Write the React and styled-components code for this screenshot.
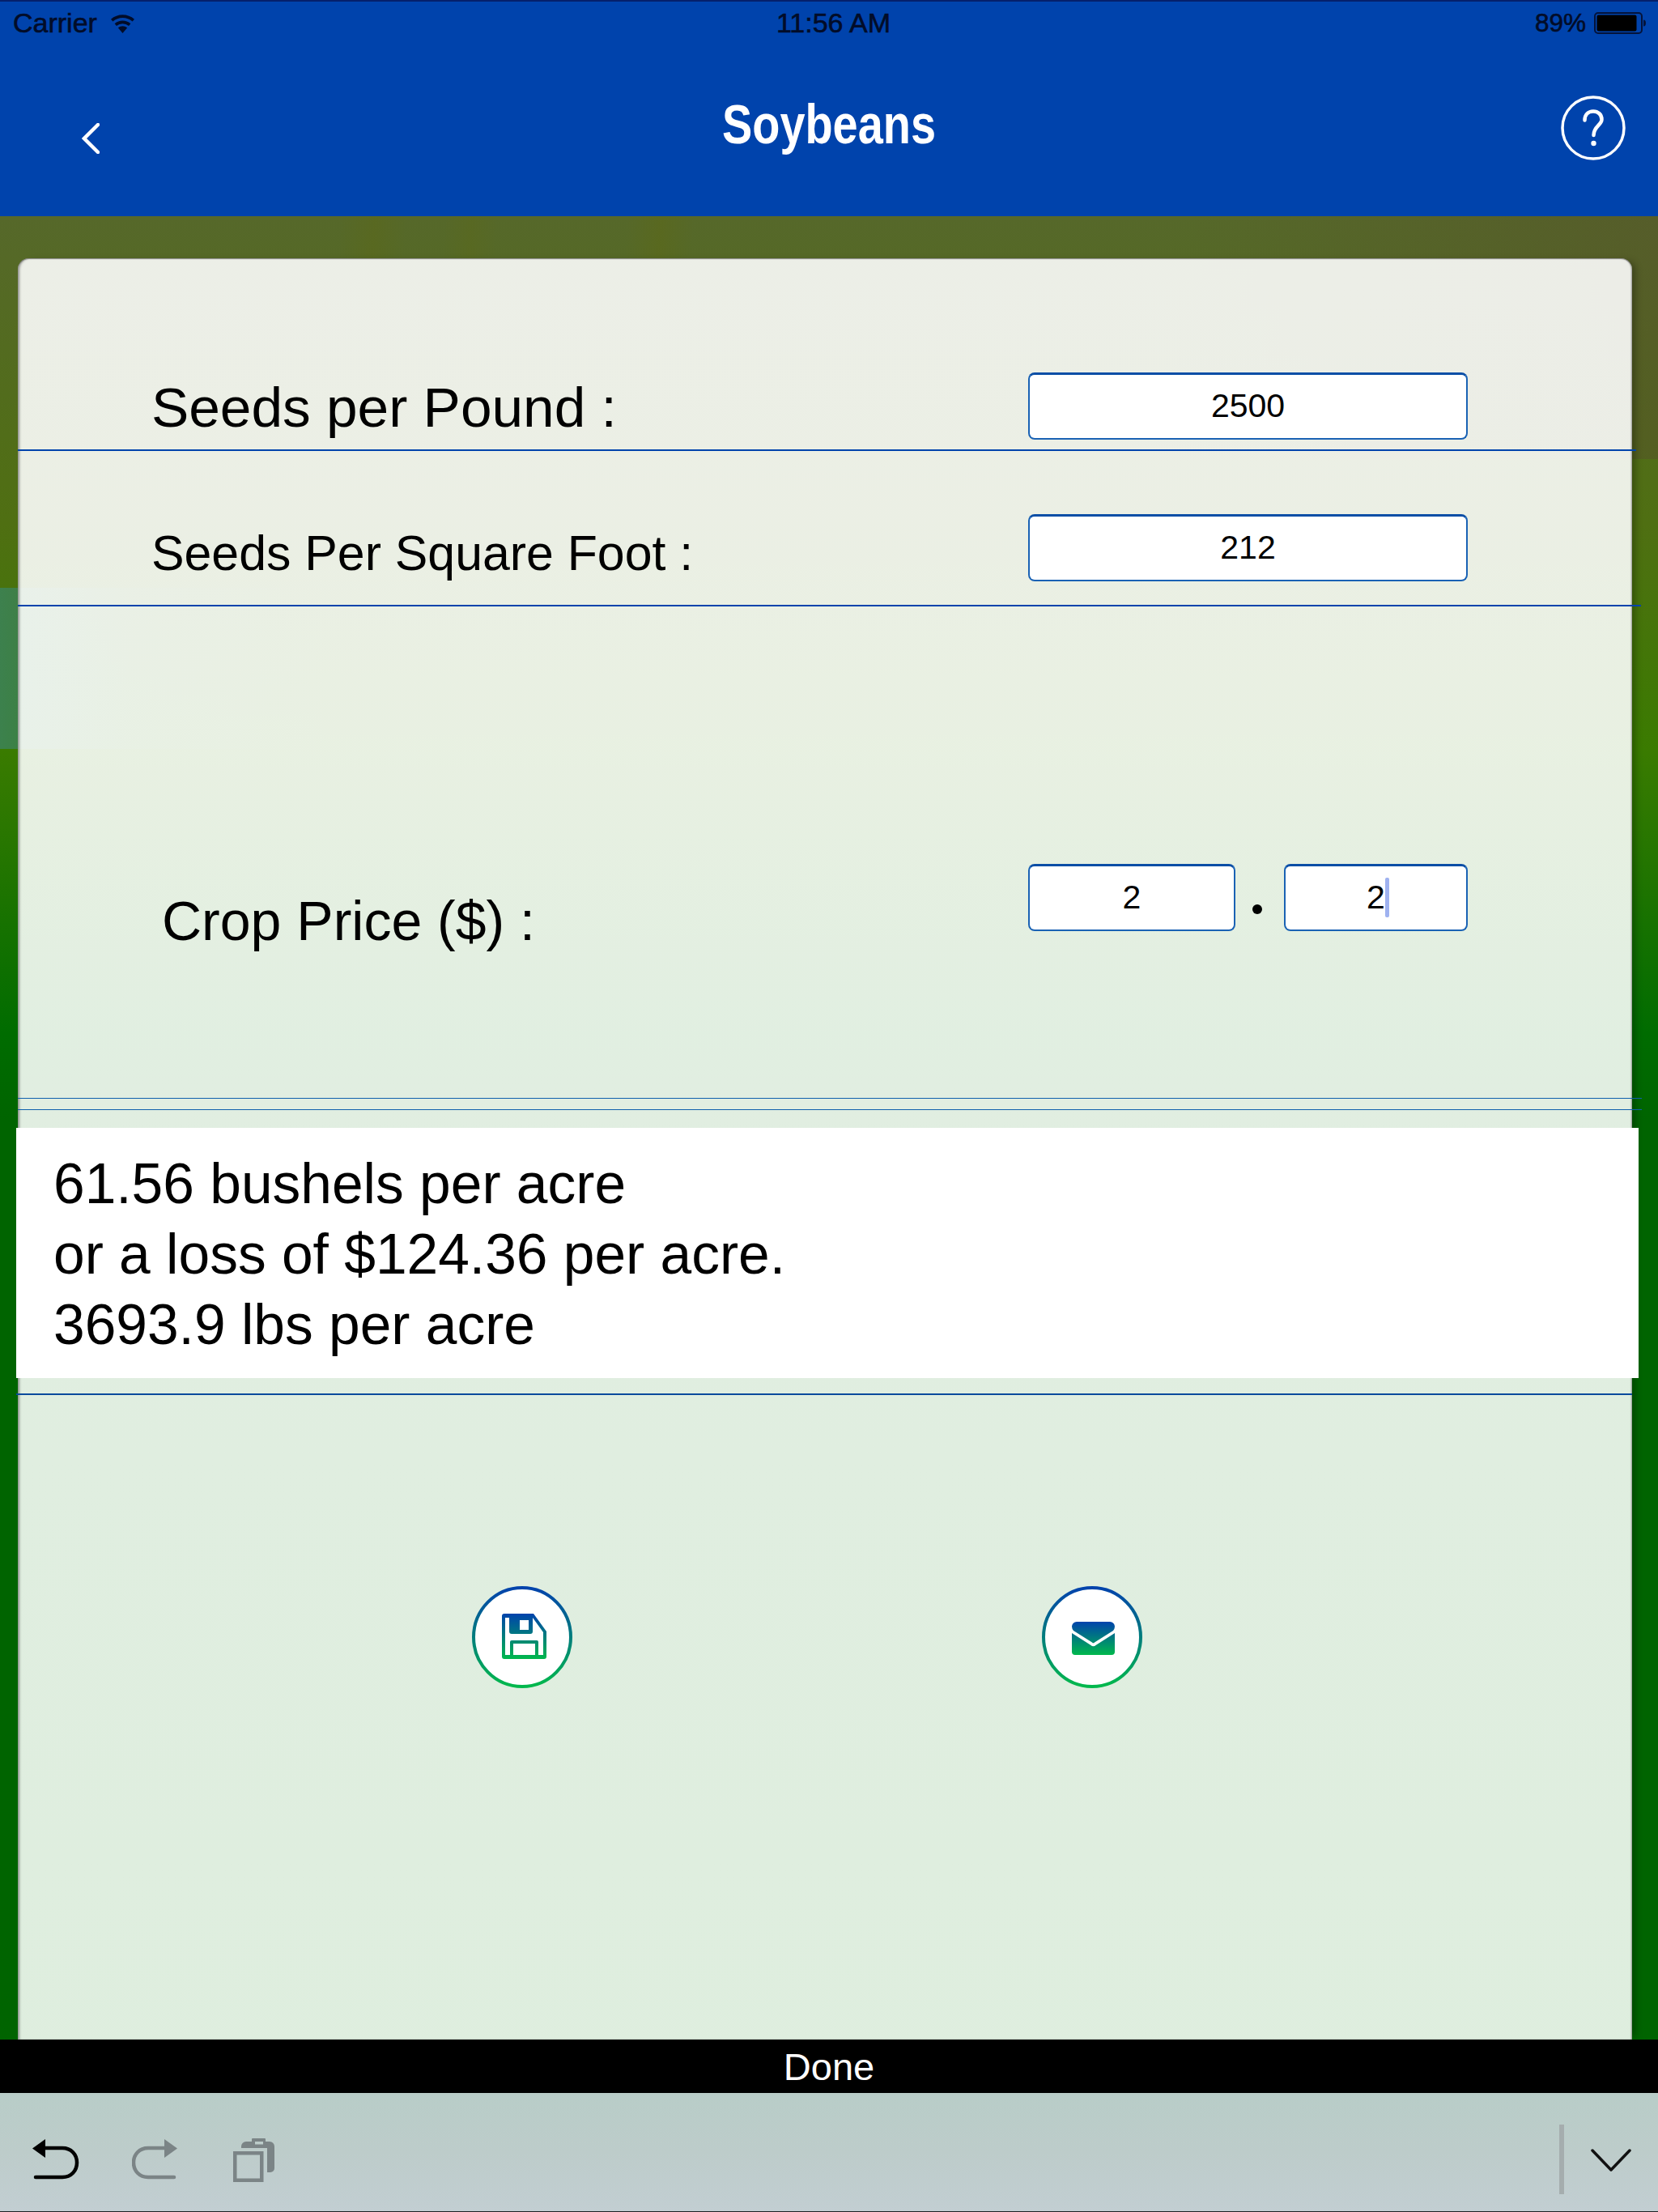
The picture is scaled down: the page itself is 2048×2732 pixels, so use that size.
import React from "react";
import styled, { createGlobalStyle } from "styled-components";

const Global = createGlobalStyle`
  html, body { margin: 0; padding: 0; background: #000; }
  body { font-family: "Liberation Sans", Arial, sans-serif; color: #000; }
`;

const Screen = styled.div`
  width: 2048px;
  height: 2732px;
  display: flex;
  flex-direction: column;
  overflow: hidden;
`;

const TopBar = styled.header`
  height: 267px;
  flex: none;
  box-sizing: border-box;
  background: #0043ac;
  border-top: 2px solid #05206b;
  display: flex;
  flex-direction: column;
`;

const StatusBar = styled.div`
  height: 52px;
  padding: 0 15px 0 16px;
  display: grid;
  grid-template-columns: 1fr auto 1fr;
  align-items: center;
  font-size: 34px;
  color: #020c28;
  -webkit-text-stroke: 0.6px #020c28;
`;

const StatusLeft = styled.div`
  display: flex;
  align-items: center;
  gap: 15px;
`;

const StatusClock = styled.span`
  margin-left: 10px;
`;

const StatusRight = styled.div`
  display: flex;
  align-items: center;
  justify-content: flex-end;
  gap: 10px;
  font-size: 31.5px;
`;

const NavBar = styled.div`
  flex: 1;
  display: grid;
  grid-template-columns: 1fr auto 1fr;
  align-items: start;
  padding: 0 40px;
`;

const NavBack = styled.div`
  margin: 98px 0 0 61px;
  line-height: 0;
`;

const NavTitle = styled.h1`
  margin: 60px 0 0;
  font-size: 69px;
  line-height: 80px;
  font-weight: 700;
  color: #fff;
  text-align: center;
  transform: scaleX(0.81);
`;

const NavHelp = styled.div`
  margin-top: 64px;
  display: flex;
  justify-content: flex-end;
  line-height: 0;
`;

const Backdrop = styled.main`
  flex: 1;
  min-height: 0;
  display: flex;
  padding: 52px 32px 0 22px;
  background:
    linear-gradient(90deg, rgba(60, 130, 85, 0.9) 0, rgba(60, 130, 85, 0.25) 160px, rgba(60, 130, 85, 0) 400px)
      0 459px / 100% 199px no-repeat,
    linear-gradient(
        94deg,
        transparent 20.5%,
        rgba(95, 105, 15, 0.3) 22.6%,
        transparent 24.5%,
        transparent 26.8%,
        rgba(95, 105, 15, 0.25) 28.4%,
        transparent 30%,
        transparent 37.8%,
        rgba(95, 105, 15, 0.35) 39.8%,
        transparent 41.8%
      )
      0 0 / 100% 52px no-repeat,
    linear-gradient(100deg, rgba(85, 85, 42, 0) 70%, rgba(85, 80, 42, 0.5) 100%) 0 0 / 100% 300px no-repeat,
    linear-gradient(180deg, #56682a 0, #4f6f12 380px, #3a7b00 660px, #006c00 1010px, #006400 1120px);
`;

const Card = styled.section`
  flex: 1;
  display: flex;
  flex-direction: column;
  background: linear-gradient(180deg, rgba(255, 255, 255, 0.89) 0, rgba(250, 255, 250, 0.89) 100%);
  border-radius: 14px 14px 0 0;
  box-shadow:
    inset 3px 0 3px -1px rgba(70, 70, 70, 0.55),
    inset -2px 0 2px -1px rgba(70, 70, 70, 0.55),
    inset 0 2px 1px -1px rgba(70, 70, 70, 0.55),
    8px 0 10px -4px rgba(0, 0, 0, 0.3);
`;

const FieldRow = styled.div`
  height: ${(p) => p.$height}px;
  box-sizing: border-box;
  flex: none;
  display: grid;
  grid-template-columns: 1248px 543px;
  border-bottom: ${(p) => (p.$thin ? "1.5px solid #0f60ac" : "2px solid #0043ac")};
  margin-right: ${(p) => p.$overhang}px;
`;

const FieldLabel = styled.label`
  padding-left: ${(p) => p.$indent}px;
  padding-top: ${(p) => p.$top}px;
  font-size: ${(p) => p.$size}px;
  line-height: 80px;
  white-space: nowrap;
`;

const Inputs = styled.div`
  padding-top: ${(p) => p.$top}px;
  display: flex;
  align-items: flex-start;
`;

const Input = styled.div`
  box-sizing: border-box;
  height: 83px;
  width: ${(p) => p.$width}px;
  flex: none;
  background: #fff;
  border: 2px solid #1a62b4;
  border-top: 3px solid #0a4ea6;
  border-radius: 8px;
  display: flex;
  align-items: center;
  justify-content: center;
  font-size: 41px;
  line-height: 1;
  padding-bottom: 2px;
`;

const Dot = styled.div`
  flex: 1;
  height: 83px;
  box-sizing: border-box;
  display: flex;
  align-items: flex-end;
  justify-content: center;
  padding: 0 6px 21px 0;

  &::before {
    content: "";
    width: 12px;
    height: 12px;
    border-radius: 50%;
    background: #000;
  }
`;

const Caret = styled.span`
  display: inline-block;
  width: 5px;
  height: 49px;
  margin-right: -5px;
  border-radius: 2px;
  background: #9fb2f0;
  vertical-align: middle;
`;

const Rule = styled.div`
  height: 1.5px;
  flex: none;
  background: #0f60ac;
  margin: 12.5px -12px 0 0;
`;

const Result = styled.output`
  display: block;
  margin: 22px -8px 0 -2px;
  height: 309px;
  box-sizing: border-box;
  flex: none;
  padding: 26px 46px 0;
  background: #fff;
  font-size: 69.5px;
  line-height: 87px;
`;

const ResultRule = styled.div`
  height: 2px;
  flex: none;
  margin: 19px 0 0 -2px;
  background: #0a4a9c;
`;

const ActionRow = styled.div`
  flex: 1;
  display: grid;
  grid-template-columns: 124px 124px;
  column-gap: 580px;
  padding: 236px 0 0 561px;
`;

const ActionButton = styled.button`
  width: 124px;
  height: 126px;
  padding: 0;
  border: 0;
  background: none;
  display: block;
`;

const DoneBar = styled.div`
  height: 66px;
  flex: none;
  background: #000;
  color: #fff;
  font-size: 47px;
  line-height: 68px;
  text-align: center;
`;

const KeyTools = styled.footer`
  height: 147px;
  flex: none;
  box-sizing: border-box;
  border-bottom: 1px solid #1c2224;
  background: linear-gradient(180deg, #b8cdc8 0, #bdccca 50%, #c2ced2 100%);
  display: flex;
  align-items: flex-start;
  padding: 53px 0 0 40px;
`;

const ToolIcon = styled.svg`
  flex: none;
  display: block;
  margin-top: ${(p) => p.$top}px;
  margin-left: ${(p) => p.$gap || 0}px;
`;

const ToolDivider = styled.div`
  width: 6px;
  height: 86px;
  margin: -14px 0 0 auto;
  background: #a5adae;
`;

const HideKeys = styled(ToolIcon)`
  margin-right: 33px;
`;

function Wifi() {
  return (
    <svg width="33" height="25" viewBox="0 0 33 25" aria-hidden="true">
      <path d="M16.5 25 L10.8 18.2 A9 9 0 0 1 22.2 18.2 Z" fill="#020c28" />
      <path d="M7.8 14.6 A13.5 13.5 0 0 1 25.2 14.6" fill="none" stroke="#020c28" strokeWidth="3.6" />
      <path d="M3.2 9.2 A20 20 0 0 1 29.8 9.2" fill="none" stroke="#020c28" strokeWidth="3.6" />
    </svg>
  );
}

function Battery() {
  return (
    <svg width="64" height="27" viewBox="0 0 64 27" aria-hidden="true">
      <rect x="1" y="1" width="58" height="25" rx="4" fill="none" stroke="#04133a" strokeWidth="2" />
      <rect x="3.5" y="3.5" width="49" height="20" rx="2" fill="#000" />
      <path d="M61 9.5 a3 4 0 0 1 3 4 a3 4 0 0 1 -3 4 Z" fill="#04133a" />
    </svg>
  );
}

function BackChevron() {
  return (
    <svg width="22" height="38" viewBox="0 0 22 38" aria-hidden="true">
      <path d="M20 2 L3 19 L20 36" fill="none" stroke="#fff" strokeWidth="4.5" strokeLinecap="round" />
    </svg>
  );
}

function HelpCircle() {
  return (
    <svg width="80" height="80" viewBox="0 0 80 80" aria-hidden="true">
      <circle cx="40" cy="40" r="38" fill="none" stroke="#fff" strokeWidth="3.5" />
      <path d="M29.5 30.5 C29.5 23.5 34 19.5 40 19.5 C46 19.5 50.5 23.5 50.5 29.5 C50.5 36.5 40.5 38 40.5 49" fill="none" stroke="#fff" strokeWidth="4.5" strokeLinecap="round" />
      <circle cx="40.5" cy="59" r="3.2" fill="#fff" />
    </svg>
  );
}

function RingIcon({ id, children }) {
  return (
    <svg width="124" height="126" viewBox="0 0 124 126" aria-hidden="true">
      <defs>
        <linearGradient id={id} x1="0" y1="0" x2="0" y2="1">
          <stop offset="0" stopColor="#0043ac" />
          <stop offset="1" stopColor="#00b84c" />
        </linearGradient>
      </defs>
      <ellipse cx="62" cy="63" rx="60" ry="61" fill="#fff" stroke={`url(#${id})`} strokeWidth="4" />
      {children}
    </svg>
  );
}

function SaveIcon() {
  return (
    <RingIcon id="saveRing">
      <defs>
        <linearGradient id="saveGrad" gradientUnits="userSpaceOnUse" x1="0" y1="34" x2="0" y2="90">
          <stop offset="0" stopColor="#0043ac" />
          <stop offset="1" stopColor="#00b84c" />
        </linearGradient>
      </defs>
      <path
        fillRule="evenodd"
        fill="url(#saveGrad)"
        d="M37 37 a3 3 0 0 1 3 -3 H76 L92 56 V87 a3 3 0 0 1 -3 3 H40 a3 3 0 0 1 -3 -3 Z
           M41 39 V85 H47 V69 a2 2 0 0 1 2 -2 H80 a2 2 0 0 1 2 2 V85 H88 V57 L75 39 V56 a3 3 0 0 1 -3 3 H49 a3 3 0 0 1 -3 -3 V39 Z
           M51 71 V85 H78 V71 Z
           M59 42 V54 H70 V42 Z"
      />
    </RingIcon>
  );
}

function MailIcon() {
  return (
    <RingIcon id="mailRing">
      <defs>
        <linearGradient id="mailGrad" gradientUnits="userSpaceOnUse" x1="0" y1="44" x2="0" y2="85">
          <stop offset="0" stopColor="#0043ac" />
          <stop offset="1" stopColor="#00b84c" />
        </linearGradient>
      </defs>
      <path fill="url(#mailGrad)" d="M43 44 H84 a6 6 0 0 1 6 6 a8 8 0 0 1 -2 5 L65 69.5 a2 2 0 0 1 -3 0 L39 55 a8 8 0 0 1 -2 -5 a6 6 0 0 1 6 -6 Z" />
      <path fill="url(#mailGrad)" d="M37 58 L60.5 73 a4 4 0 0 0 6 0 L90 58 V81 a4 4 0 0 1 -4 4 H41 a4 4 0 0 1 -4 -4 Z" />
    </RingIcon>
  );
}

export default function App() {
  return (
    <Screen>
      <Global />
      <TopBar>
        <StatusBar>
          <StatusLeft>
            <span>Carrier</span>
            <Wifi />
          </StatusLeft>
          <StatusClock>11:56 AM</StatusClock>
          <StatusRight>
            <span>89%</span>
            <Battery />
          </StatusRight>
        </StatusBar>
        <NavBar>
          <NavBack>
            <BackChevron />
          </NavBack>
          <NavTitle>Soybeans</NavTitle>
          <NavHelp>
            <HelpCircle />
          </NavHelp>
        </NavBar>
      </TopBar>

      <Backdrop>
        <Card>
          <FieldRow $height={238} $overhang={-5}>
            <FieldLabel $indent={165} $top={144} $size={69.4}>Seeds per Pound :</FieldLabel>
            <Inputs $top={141}>
              <Input $width={543}>2500</Input>
            </Inputs>
          </FieldRow>
          <FieldRow $height={192} $overhang={-11}>
            <FieldLabel $indent={165} $top={86} $size={60.8}>Seeds Per Square Foot :</FieldLabel>
            <Inputs $top={78}>
              <Input $width={543}>212</Input>
            </Inputs>
          </FieldRow>
          <FieldRow $height={608} $overhang={-12} $thin>
            <FieldLabel $indent={178} $top={348} $size={68}>Crop Price ($) :</FieldLabel>
            <Inputs $top={318}>
              <Input $width={256}>2</Input>
              <Dot />
              <Input $width={227}>
                2<Caret />
              </Input>
            </Inputs>
          </FieldRow>
          <Rule />
          <Result>
            61.56 bushels per acre
            <br />
            or a loss of $124.36 per acre.
            <br />
            3693.9 lbs per acre
          </Result>
          <ResultRule />
          <ActionRow>
            <ActionButton aria-label="Save"><SaveIcon /></ActionButton>
            <ActionButton aria-label="Email"><MailIcon /></ActionButton>
          </ActionRow>
        </Card>
      </Backdrop>

      <DoneBar>Done</DoneBar>

      <KeyTools>
        <ToolIcon $top={4} width="58" height="52" viewBox="0 0 58 52" aria-hidden="true">
          <path d="M16 0 V23 L0 11.5 Z" fill="#000" />
          <path d="M14 11 H37 C48 11 55 19 55 29 C55 39 48 47 37 47 H4" fill="none" stroke="#000" strokeWidth="4.5" strokeLinecap="round" />
        </ToolIcon>
        <ToolIcon $top={4} $gap={65} width="56" height="52" viewBox="0 0 56 52" aria-hidden="true">
          <path d="M40 0 V23 L56 11.5 Z" fill="#7b8486" />
          <path d="M42 11 H20 C9 11 2 19 2 29 C2 39 9 47 20 47 H52" fill="none" stroke="#7b8486" strokeWidth="4.5" strokeLinecap="round" />
        </ToolIcon>
        <ToolIcon $top={3} $gap={69} width="52" height="54" viewBox="0 0 52 54" aria-hidden="true">
          <path fillRule="evenodd" fill="#7b8486" d="M10 10 a6 6 0 0 1 6 -6 H23 V1 a1 1 0 0 1 1 -1 H39 a1 1 0 0 1 1 1 V4 H45 a6 6 0 0 1 6 6 V37 a5 5 0 0 1 -5 5 H42 V12 H10 Z M27 4 V7.5 H37 V4 Z" />
          <rect x="2.25" y="18.25" width="33" height="33.5" fill="none" stroke="#7b8486" strokeWidth="4.5" />
        </ToolIcon>
        <ToolDivider />
        <HideKeys $top={16} $gap={33} width="50" height="30" viewBox="0 0 50 30" aria-hidden="true">
          <path d="M2 2 L25 26 L48 2" fill="none" stroke="#111" strokeWidth="3.5" strokeLinecap="round" strokeLinejoin="round" />
        </HideKeys>
      </KeyTools>
    </Screen>
  );
}
